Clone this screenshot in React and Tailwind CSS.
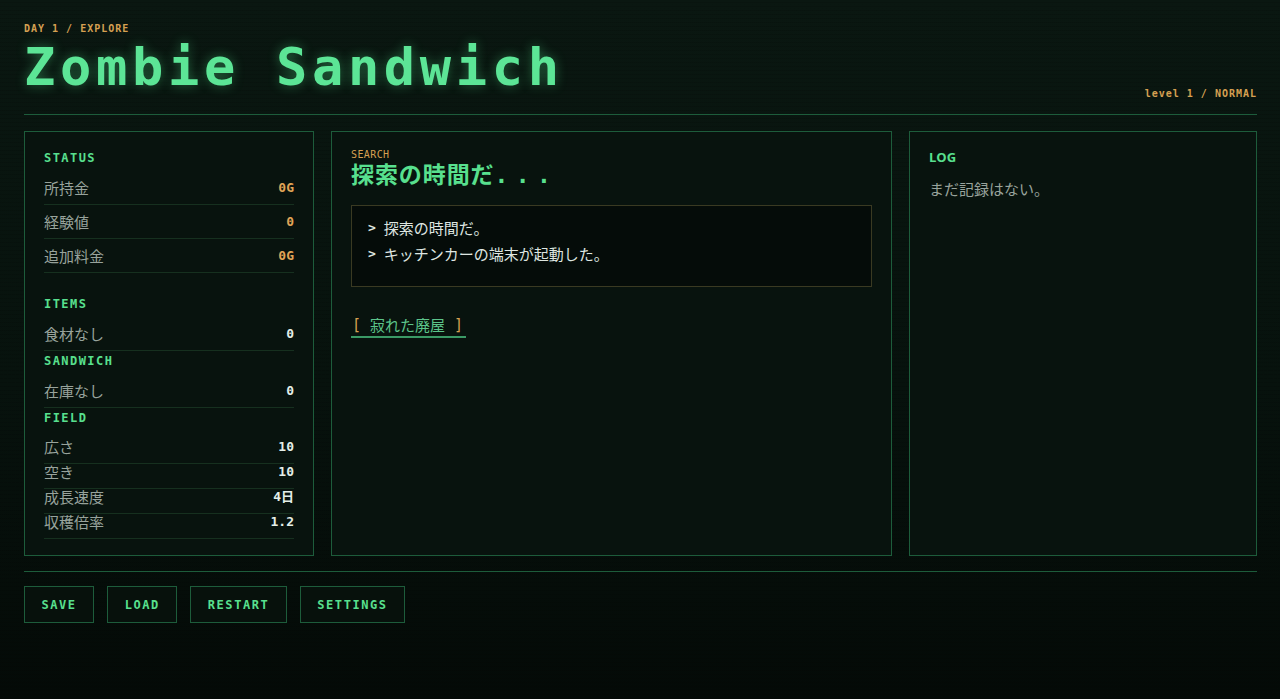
const MONO = "font-['DejaVu_Sans_Mono','Liberation_Mono',monospace]";
const JP = "font-['Noto_Sans_CJK_JP','Noto_Sans',sans-serif]";

const STATUS_ROWS = [
  { label: '所持金', value: '0G' },
  { label: '経験値', value: '0' },
  { label: '追加料金', value: '0G' },
];

const FIELD_ROWS = [
  { label: '広さ', value: '10' },
  { label: '空き', value: '10' },
  { label: '成長速度', value: '4日' },
  { label: '収穫倍率', value: '1.2' },
];

function SectionTitle({ children, className = '' }) {
  return (
    <h3 className={`${MONO} h-4 text-[12px] font-bold leading-4 tracking-[0.12em] text-[#58e08e] ${className}`}>
      {children}
    </h3>
  );
}

function StatRow({ label, value, tone = 'orange', className = 'h-[34px] items-center' }) {
  return (
    <div className={`flex justify-between border-b border-[#16301f] ${className}`}>
      <span className={`${JP} text-[15px] leading-4 text-[#98a39c]`}>{label}</span>
      <span
        className={`text-[13px] font-bold leading-4 [font-family:'DejaVu_Sans_Mono','Noto_Sans_CJK_JP',monospace] ${
          tone === 'orange' ? 'text-[#e0a557]' : 'text-[#e4efe8]'
        }`}
      >
        {value}
      </span>
    </div>
  );
}

function StatusPanel() {
  return (
    <section className="border border-[#1d5c3b] bg-[#08130e] px-[19px] pt-[18px]">
      <SectionTitle>STATUS</SectionTitle>
      <div className="mt-[5px]">
        {STATUS_ROWS.map((r) => (
          <StatRow key={r.label} {...r} />
        ))}
      </div>

      <SectionTitle className="mt-[23px]">ITEMS</SectionTitle>
      <div className="mt-[5px]">
        <StatRow label="食材なし" value="0" tone="white" />
      </div>

      <SectionTitle className="mt-[2px]">SANDWICH</SectionTitle>
      <div className="mt-[5px]">
        <StatRow label="在庫なし" value="0" tone="white" />
      </div>

      <SectionTitle className="mt-[2px]">FIELD</SectionTitle>
      <div className="mt-[5px]">
        {FIELD_ROWS.map((r, i) => (
          <StatRow
            key={r.label}
            {...r}
            tone="white"
            className={i === 0 ? 'h-[33px] items-center' : 'h-[25px] items-start'}
          />
        ))}
      </div>
    </section>
  );
}

function SearchPanel() {
  return (
    <section className="border border-[#1d5c3b] bg-[#08130e] px-[19px] pt-[18px]">
      <p className={`${MONO} text-[10px] leading-[10px] tracking-[0.04em] text-[#d6a052]`}>SEARCH</p>
      <h2 className="text-[23px] font-bold leading-[26px] tracking-[0.04em] text-[#58e08e] [font-family:'Noto_Sans_CJK_JP',sans-serif]">
        探索の時間だ<span className={`${MONO} tracking-[0.32em]`}>...</span>
      </h2>

      <div className="mt-[17px] flex h-[82px] flex-col gap-[6px] border border-[#3a3a22] bg-[#050c09] px-[16px] pt-[12px]">
        {['探索の時間だ。', 'キッチンカーの端末が起動した。'].map((line) => (
          <p key={line} className={`${JP} flex items-center gap-[8px] text-[15px] leading-5 text-[#dfe6e1]`}>
            <span className={`${MONO} text-[13px] font-bold`}>&gt;</span>
            {line}
          </p>
        ))}
      </div>

      <button
        type="button"
        className="mt-[28px] flex items-center gap-[9px] border-b-2 border-[#3b9a66] pb-[1px] pl-[1px] pr-[3px] text-[15px] leading-5"
      >
        <span className={`${MONO} text-[#d6a052]`}>[</span>
        <span className={`${JP} text-[#5cc48a]`}>寂れた廃屋</span>
        <span className={`${MONO} text-[#d6a052]`}>]</span>
      </button>
    </section>
  );
}

function LogPanel() {
  return (
    <section className="border border-[#1d5c3b] bg-[#08130e] px-[19px] pt-[17px]">
      <h3 className="h-4 text-[13px] font-bold leading-4 text-[#58e08e] [font-family:'Open_Sans','Noto_Sans',sans-serif]">
        LOG
      </h3>
      <p className={`${JP} mt-[16px] text-[15px] leading-4 text-[#98a39c]`}>まだ記録はない。</p>
    </section>
  );
}

const BUTTONS = ['SAVE', 'LOAD', 'RESTART', 'SETTINGS'];

export default function App() {
  return (
    <div className="min-h-[699px] w-full bg-[repeating-linear-gradient(0deg,rgba(0,0,0,0.12)_0px,rgba(0,0,0,0.12)_1px,transparent_1px,transparent_4px),linear-gradient(180deg,#0a1711_0%,#07120d_55%,#040a07_100%)] px-[24px] pt-[23px]">
      <div className="w-[1233px]">
        <header className="flex items-end justify-between border-b border-[#1d5c3b] pb-[17px]">
          <div>
            <p className={`${MONO} text-[10px] font-bold leading-3 tracking-[0.1em] text-[#d6a052]`}>
              DAY 1 / EXPLORE
            </p>
            <h1
              className={`${MONO} mt-[2px] text-[52px] font-bold leading-[60px] tracking-[0.09em] text-[#5ce596] [text-shadow:0_0_12px_rgba(80,230,140,0.4)]`}
            >
              Zombie Sandwich
            </h1>
          </div>
          <p className={`${MONO} mb-[-3px] text-[10px] font-bold leading-3 tracking-[0.1em] text-[#d6a052]`}>
            level 1 / NORMAL
          </p>
        </header>

        <main className="mt-[16px] grid h-[425px] grid-cols-[290px_1fr_348px] gap-[17px]">
          <StatusPanel />
          <SearchPanel />
          <LogPanel />
        </main>

        <footer className="mt-[15px] flex gap-[13px] border-t border-[#1d5c3b] pt-[14px]">
          {BUTTONS.map((b) => (
            <button
              key={b}
              type="button"
              className={`${MONO} h-[37px] border border-[#1d5c3b] bg-[#07110c] px-[16.5px] text-[12px] font-bold tracking-[0.13em] text-[#58e08e]`}
            >
              {b}
            </button>
          ))}
        </footer>
      </div>
    </div>
  );
}
